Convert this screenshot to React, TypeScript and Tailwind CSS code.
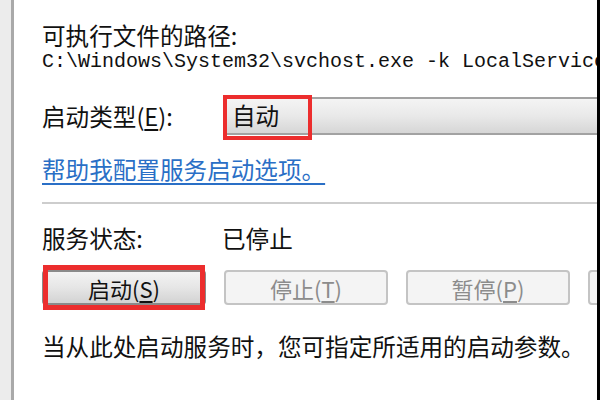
import React from 'react'

const cjk = "font-['Noto_Sans_CJK_SC','Noto_Sans',sans-serif]"

function Key({ k }: { k: string }) {
  return (
    <>
      (<span className="underline underline-offset-[3px]">{k}</span>)
    </>
  )
}

function Btn({ label, k, disabled }: { label?: string; k?: string; disabled?: boolean }) {
  return (
    <div
      className={
        'flex h-[35px] w-[164px] shrink-0 items-center justify-center rounded-[4px] border-2 text-[22px] leading-none ' +
        (disabled
          ? 'border-[#c4c4c4] bg-[#f4f4f4] text-[#8c8c8c]'
          : 'border-[#8a8a8a] bg-gradient-to-b from-[#f3f3f3] via-[#e6e6e6] to-[#d3d3d3] text-[#111]')
      }
    >
      {label}
      {k && <Key k={k} />}
    </div>
  )
}

export default function App() {
  return (
    <div className={`flex h-[400px] w-[600px] overflow-hidden bg-white text-[#111] ${cjk}`}>
      <div className="w-[14px] shrink-0 border-r-[3px] border-[#a9a9a9] bg-[#ececec]" />

      <div className="flex min-w-0 flex-1 flex-col overflow-hidden pl-[28px]">
        <div className="mt-[20px] h-[30px] text-[23.6px] leading-[30px]">可执行文件的路径:</div>
        <div className="h-[24px] whitespace-nowrap font-['Liberation_Mono',monospace] text-[20px] leading-[24px]">
          C:\Windows\System32\svchost.exe -k LocalService
        </div>

        <div className="mt-[19px] flex h-[45px] items-center">
          <div className="w-[182px] shrink-0 text-[23.6px] leading-[30px]">
            启动类型<Key k="E" />:
          </div>
          <div className="relative flex h-[38px] flex-1 items-center border-y-2 border-l-2 border-[#a2a2a2] bg-gradient-to-b from-[#f4f4f4] via-[#e9e9e9] to-[#d6d6d6] pl-[6px] text-[23.6px]">
            自动
            <div className="absolute left-[-3px] top-[-4px] h-[45px] w-[89px] border-[4px] border-[#ec2d2d]" />
          </div>
        </div>

        <div className="mt-[16px] h-[30px] text-[23.6px] leading-[30px] text-[#2a6fc6]">
          <span className="underline decoration-2 underline-offset-[4px]">帮助我配置服务启动选项。</span>
        </div>

        <div className="mt-[18px] h-[2px] bg-[#cdcdcd]" />

        <div className="mt-[19px] flex h-[30px] items-center text-[23.6px] leading-[30px]">
          <div className="w-[180px] shrink-0">服务状态:</div>
          <div>已停止</div>
        </div>

        <div className="mt-[17px] flex gap-[18px]">
          <div className="relative">
            <Btn label="启动" k="S" />
            <div className="absolute left-[1px] right-[1px] top-[-5px] bottom-[-5px] border-[5px] border-[#ec2d2d]" />
          </div>
          <Btn label="停止" k="T" disabled />
          <Btn label="暂停" k="P" disabled />
          <Btn disabled />
        </div>

        <div className="mt-[26px] h-[30px] whitespace-nowrap text-[23.6px] leading-[30px]">
          当从此处启动服务时，您可指定所适用的启动参数。
        </div>
      </div>

      <div className="w-[3px] shrink-0 bg-black" />
    </div>
  )
}
